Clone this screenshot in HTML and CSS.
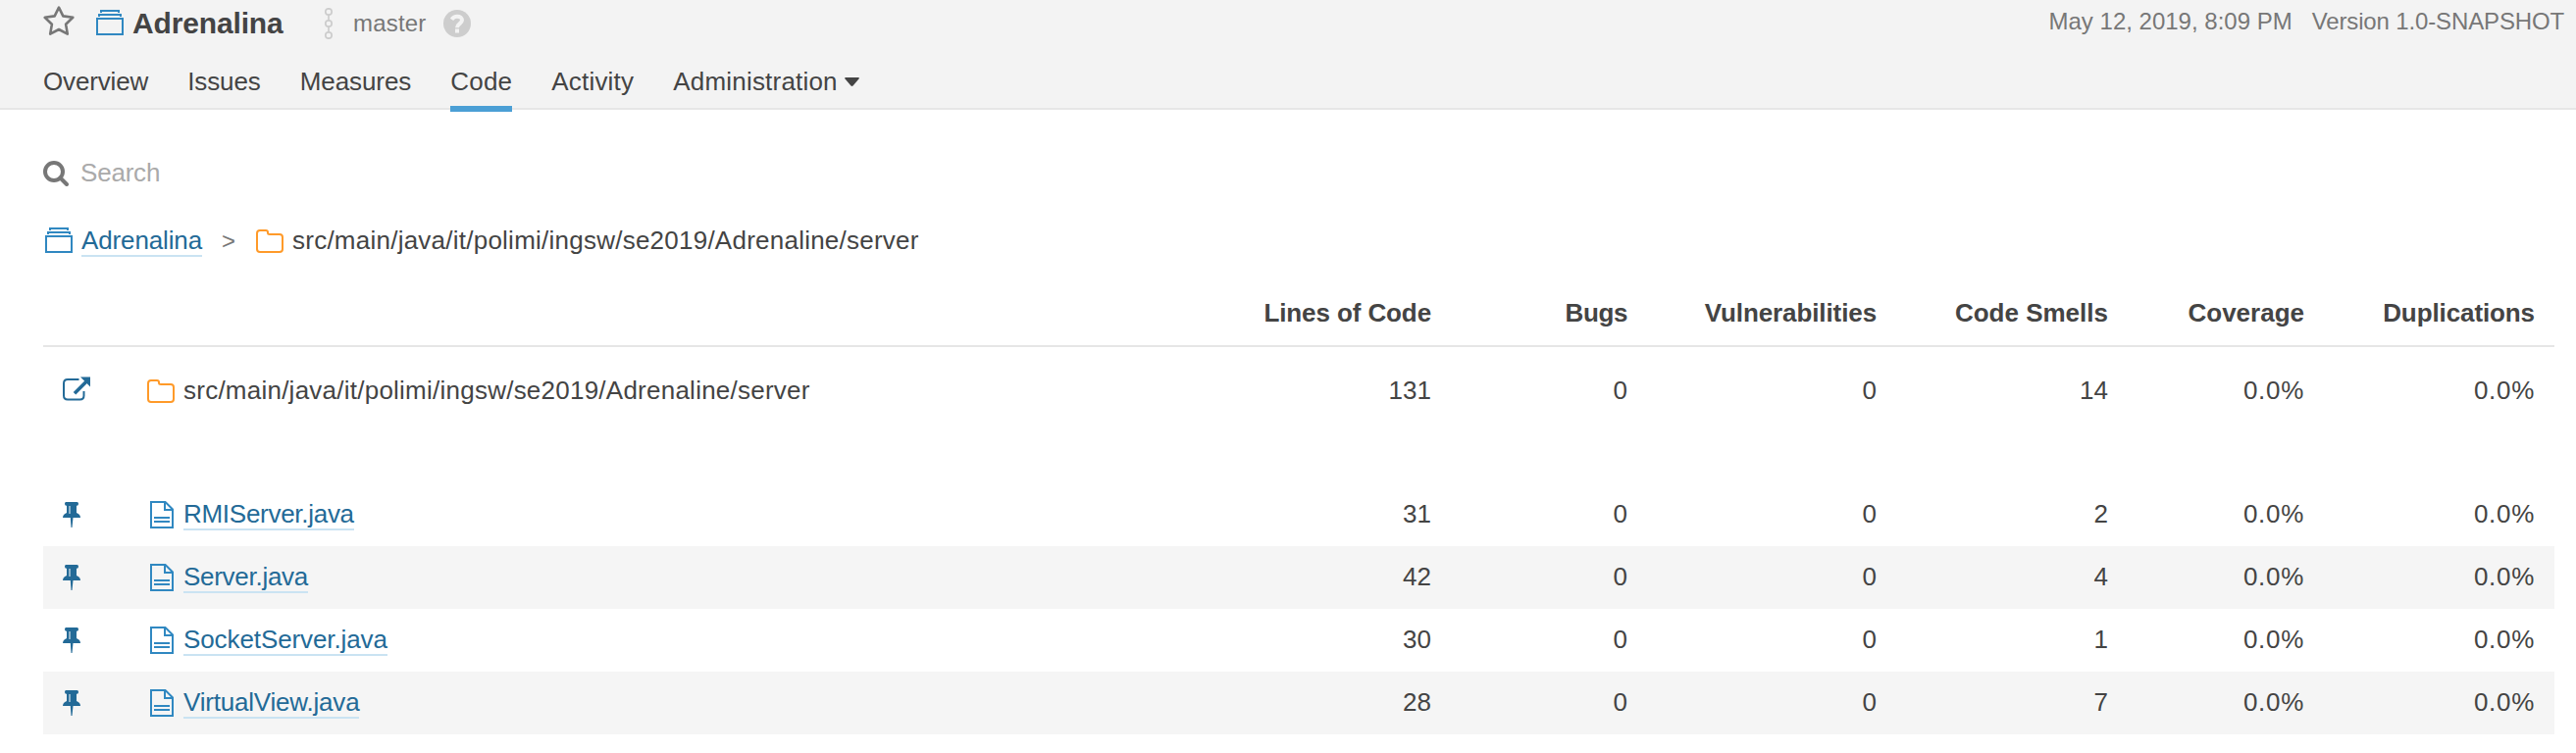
FILE: index.html
```html
<!DOCTYPE html>
<html lang="en">
<head>
<meta charset="utf-8">
<title>Adrenalina - Code</title>
<link rel="stylesheet" href="styles.css">
</head>
<body>
<svg class="defs" width="0" height="0">
  <symbol id="project" viewBox="0 0 28 26"><path fill="none" stroke="#3088c1" stroke-width="2" d="M1 9h26v16H1zM3 7V5h22v2M5 3V1h18v2"/></symbol>
  <symbol id="folder" viewBox="0 0 28 24"><path fill="none" stroke="#ff9a29" stroke-width="2" d="M4 1h6q2 0 2 2v0.500q0 1.500 2 1.500h10q3 0 3 3v12q0 3-3 3H4q-3 0-3-3V4q0-3 3-3z"/></symbol>
  <symbol id="file" viewBox="0 0 24 28"><path fill="none" stroke="#3088c1" stroke-width="2" d="M1 1h14.500L23 8.500V27H1zM15 1v8h8M4 17h16M4 21h16"/></symbol>
  <symbol id="pin" viewBox="0 0 18 26"><path fill="#236a97" d="M3.500 0h11q1.500 0 1.500 1.800t-1.500 1.900H14v7.300q4 1.500 4 5h-7.500L9.500 26h-1L7.800 16H0q0-3.500 4-5V3.700h-.5Q2 3.700 2 1.800T3.500 0z"/><path fill="#8fb3ca" d="M6 4h2v8H6z"/></symbol>
</svg>
<header class="header">
  <div class="topline">
    <svg class="star" viewBox="0 0 32 30"><path fill="none" stroke="#777" stroke-width="2.600" stroke-linejoin="round" d="M16 1.700l4.300 8.700 10 1.400-7.200 6.900 1.700 9.900L16 24l-8.800 4.600 1.700-9.900-7.200-6.900 10-1.400z"/></svg>
    <svg class="icon-project"><use href="#project"/></svg>
    <h1 class="project-name">Adrenalina</h1>
    <svg class="branch" viewBox="0 0 10 32"><g fill="none" stroke="#cdcdcd" stroke-width="1.700"><circle cx="5" cy="4" r="3.200"/><circle cx="5" cy="16" r="3.200"/><circle cx="5" cy="28" r="3.200"/><path d="M5 7v6M5 19v6"/></g></svg>
    <span class="branch-name">master</span>
    <svg class="help" viewBox="0 0 28 28"><circle cx="14" cy="14" r="14" fill="#cdcdcd"/><path fill="none" stroke="#f3f3f3" stroke-width="4" d="M8.500 9.800C10 7.600 11.700 6.800 14 6.800c3 0 5 1.600 5 3.800 0 3.400-5 3.600-5 7.600"/><path fill="#f3f3f3" d="M12 19.500h4v4h-4z"/></svg>
    <div class="meta"><span class="date">May 12, 2019, 8:09 PM</span><span class="version">Version 1.0-SNAPSHOT</span></div>
  </div>
  <nav class="tabs">
    <a class="tab overview">Overview</a>
    <a class="tab issues">Issues</a>
    <a class="tab measures">Measures</a>
    <a class="tab code active">Code</a>
    <a class="tab activity">Activity</a>
    <a class="tab admin">Administration<svg class="caret" viewBox="0 0 15 9"><path fill="#444" d="M1 0h13q1.500 .3.500 1.500L8.500 8.500q-1 .8-2 0L.5 1.500Q-.4.300 1 0z"/></svg></a>
  </nav>
</header>
<main class="page">
  <div class="search">
    <svg class="search-icon" viewBox="0 0 26 26"><circle cx="11" cy="11" r="9" fill="none" stroke="#777" stroke-width="4"/><path stroke="#777" stroke-width="4" stroke-linecap="round" d="M17.500 17.500L24 24"/></svg>
    <span class="placeholder">Search</span>
  </div>
  <div class="breadcrumbs">
    <svg class="icon-project"><use href="#project"/></svg>
    <a class="link crumb">Adrenalina</a>
    <span class="separator">&gt;</span>
    <svg class="icon-folder"><use href="#folder"/></svg>
    <span class="path">src/main/java/it/polimi/ingsw/se2019/Adrenaline/server</span>
  </div>
  <section class="table">
    <div class="row head"><span></span><span></span><span class="snug">Lines of Code</span><span class="tight">Bugs</span><span class="snug">Vulnerabilities</span><span>Code Smells</span><span>Coverage</span><span class="snug">Duplications</span></div>
    <div class="row base">
      <span class="action"><svg class="detach" viewBox="0 0 28 25"><path fill="none" stroke="#236a97" stroke-width="2" d="M16.500 3H5Q1 3 1 7v12.500q0 4 4 4h12.500q4 0 4-4V15"/><path stroke="#236a97" stroke-width="3.600" d="M12 17.200L24 5.200"/><path fill="#236a97" d="M18 .5h10v10z"/></svg></span>
      <span class="name"><svg class="icon-folder"><use href="#folder"/></svg><span class="path">src/main/java/it/polimi/ingsw/se2019/Adrenaline/server</span></span>
      <span>131</span><span>0</span><span>0</span><span>14</span><span class="percent">0.0%</span><span class="percent">0.0%</span>
    </div>
    <div class="files">
      <div class="row file">
        <span class="action"><svg class="pin"><use href="#pin"/></svg></span>
        <span class="name"><svg class="icon-file"><use href="#file"/></svg><a class="link rmi">RMIServer.java</a></span>
        <span>31</span><span>0</span><span>0</span><span>2</span><span class="percent">0.0%</span><span class="percent">0.0%</span>
      </div>
      <div class="row file">
        <span class="action"><svg class="pin"><use href="#pin"/></svg></span>
        <span class="name"><svg class="icon-file"><use href="#file"/></svg><a class="link srv">Server.java</a></span>
        <span>42</span><span>0</span><span>0</span><span>4</span><span class="percent">0.0%</span><span class="percent">0.0%</span>
      </div>
      <div class="row file">
        <span class="action"><svg class="pin"><use href="#pin"/></svg></span>
        <span class="name"><svg class="icon-file"><use href="#file"/></svg><a class="link sock">SocketServer.java</a></span>
        <span>30</span><span>0</span><span>0</span><span>1</span><span class="percent">0.0%</span><span class="percent">0.0%</span>
      </div>
      <div class="row file">
        <span class="action"><svg class="pin"><use href="#pin"/></svg></span>
        <span class="name"><svg class="icon-file"><use href="#file"/></svg><a class="link view">VirtualView.java</a></span>
        <span>28</span><span>0</span><span>0</span><span>7</span><span class="percent">0.0%</span><span class="percent">0.0%</span>
      </div>
    </div>
  </section>
</main>
</body>
</html>
```

FILE: styles.css
```css
* { box-sizing: border-box; }
body {
  margin: 0;
  background: #fff;
  color: #444;
  font: 26px/30px "Liberation Sans", Arial, sans-serif;
}
svg { display: block; flex: none; }
.defs { display: none; }

/* Header */
.header {
  height: 112px;
  padding-left: 44px;
  background: #f3f3f3;
  border-bottom: 2px solid #e6e6e6;
}
.topline { display: flex; align-items: flex-start; height: 48px; }
.star { width: 32px; height: 30px; margin-top: 6px; }
.topline .icon-project { margin: 10px 9px 0 22px; }
.project-name {
  width: 195px;
  margin: 8px 0 0;
  font-size: 30px;
  line-height: 32px;
  letter-spacing: -0.15px;
}
.branch { width: 10px; height: 32px; margin-top: 8px; }
.branch-name {
  width: 112px;
  margin-top: 9px;
  padding-left: 20px;
  color: #777;
  font-size: 24px;
  letter-spacing: 0.2px;
}
.help { width: 28px; height: 28px; margin-top: 10px; }
.meta {
  display: flex;
  gap: 20px;
  margin: 7px 12px 0 auto;
  color: #777;
  font-size: 24px;
}
.version { letter-spacing: -0.14px; }
.tabs { display: flex; gap: 40px; height: 62px; }
.tab {
  display: flex;
  height: 66px;
  padding-top: 10px;
  line-height: 50px;
  border-bottom: 6px solid transparent;
}
.active { border-color: #4b9fd5; }
.overview { letter-spacing: -0.15px; }
.issues { letter-spacing: -0.1px; }
.measures { letter-spacing: -0.08px; }
.code { letter-spacing: 0.22px; }
.activity { letter-spacing: 0.2px; }
.admin { letter-spacing: 0.2px; }
.caret { width: 15px; height: 9px; margin: 21px 0 0 7px; }

/* Search and breadcrumbs */
.page { padding: 49px 22px 0 44px; }
.search { display: flex; height: 30px; }
.search-icon { width: 26px; height: 26px; margin: 3px 12px 0 0; }
.placeholder { color: #aaa; letter-spacing: -0.2px; }
.breadcrumbs { display: flex; height: 30px; margin-top: 39px; padding-left: 2px; }
.icon-project { width: 28px; height: 26px; }
.breadcrumbs .icon-project { margin: 2px 9px 0 0; }
.link { color: #236a97; height: 32px; border-bottom: 2px solid #cae3f2; }
.crumb { letter-spacing: -0.13px; }
.separator { width: 55px; padding-left: 20px; color: #777; font-size: 24px; line-height: 32px; }
.icon-folder { width: 28px; height: 24px; }
.breadcrumbs .icon-folder { margin: 4px 9px 0 0; }
.path { letter-spacing: 0.24px; }

/* Measures table */
.table { margin-top: 26px; }
.row {
  display: grid;
  grid-template-columns: 106px 1fr 200px 200px 254px 236px 200px 235px;
  padding-right: 20px;
  text-align: right;
}
.head { height: 68px; padding-top: 18px; font-weight: bold; border-bottom: 2px solid #e6e6e6; }
.snug { letter-spacing: -0.1px; }
.tight { letter-spacing: -0.4px; }
.percent { letter-spacing: 0.7px; }
.base { height: 139px; padding-top: 29px; }
.action { padding-left: 20px; }
.name { display: flex; }
.detach { width: 28px; height: 25px; margin-top: 1px; }
.name .icon-folder { margin: 4px 9px 0 0; }
.file { height: 64px; padding-top: 16px; }
.file:nth-child(even) { background: #f5f5f5; }
.pin { width: 18px; height: 26px; margin-top: 3px; }
.icon-file { width: 24px; height: 28px; margin: 2px 10px 0 3px; }
.rmi, .srv { letter-spacing: -0.28px; }
.sock { letter-spacing: -0.1px; }
.view { letter-spacing: -0.2px; }
```
